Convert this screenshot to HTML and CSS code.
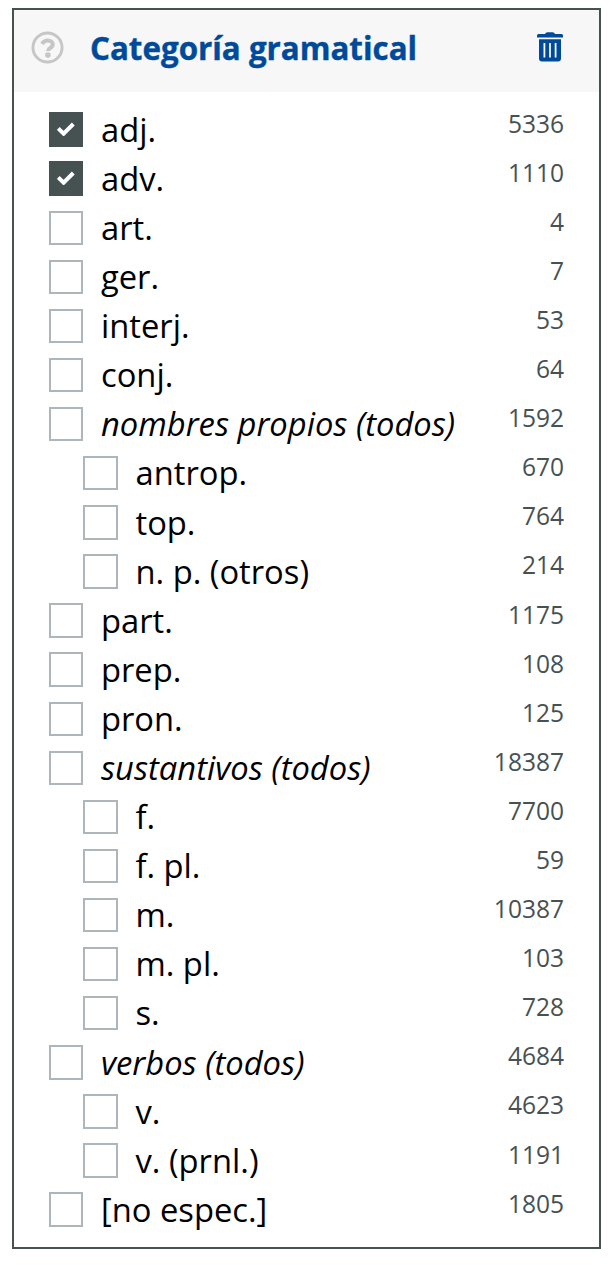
FILE: index.html
```
<!DOCTYPE html>
<html lang="es">
<head>
<meta charset="utf-8">
<title>Categoría gramatical</title>
<link rel="stylesheet" href="styles.css">
</head>
<body>
<section class="panel">
  <header class="head">
    <svg class="help" viewBox="0 0 34 34" fill="none" stroke="#c6c6c6">
      <circle cx="17" cy="17" r="15" stroke-width="3"/>
      <path d="M11.400 13.400C12.800 10.800 14.800 9.800 17.200 9.800c3 0 5.200 1.800 5.200 4.100 0 3.800-4.900 3.200-4.900 6.600" stroke-width="4.200"/>
      <circle cx="17.400" cy="24.700" r="2.900" fill="#c6c6c6" stroke="none"/>
    </svg>
    <h2 class="title">Categoría gramatical</h2>
    <svg class="trash" viewBox="0 0 26 30" fill="#004a9c">
      <path d="M0 5.500V3.500Q0 2 1.500 2H8Q8.500 .3 10.500 .3h5Q17.500 .3 18 2h6.500Q26 2 26 3.500V5.500z"/>
      <path fill-rule="evenodd" d="M2 7.300h22v19.200q0 3-3 3H5q-3 0-3-3zM6.500 11v14.500h1.800V11zm5.600 0v14.500h1.800V11zm5.600 0v14.500h1.800V11z"/>
    </svg>
  </header>
  <ul class="list">
    <li class="row"><span class="box on"><svg viewBox="0 0 18 14"><path d="M1.300 6.500 6.600 11.700 16.300 2" fill="none" stroke="#fff" stroke-width="4"/></svg></span><span class="label">adj.</span><span class="count">5336</span></li>
    <li class="row"><span class="box on"><svg viewBox="0 0 18 14"><path d="M1.300 6.500 6.600 11.700 16.300 2" fill="none" stroke="#fff" stroke-width="4"/></svg></span><span class="label">adv.</span><span class="count">1110</span></li>
    <li class="row"><span class="box"></span><span class="label">art.</span><span class="count">4</span></li>
    <li class="row"><span class="box"></span><span class="label">ger.</span><span class="count">7</span></li>
    <li class="row"><span class="box"></span><span class="label">interj.</span><span class="count">53</span></li>
    <li class="row"><span class="box"></span><span class="label">conj.</span><span class="count">64</span></li>
    <li class="row"><span class="box"></span><span class="label group">nombres propios (todos)</span><span class="count">1592</span></li>
    <li class="row sub"><span class="box"></span><span class="label">antrop.</span><span class="count">670</span></li>
    <li class="row sub"><span class="box"></span><span class="label">top.</span><span class="count">764</span></li>
    <li class="row sub"><span class="box"></span><span class="label">n. p. (otros)</span><span class="count">214</span></li>
    <li class="row"><span class="box"></span><span class="label">part.</span><span class="count">1175</span></li>
    <li class="row"><span class="box"></span><span class="label">prep.</span><span class="count">108</span></li>
    <li class="row"><span class="box"></span><span class="label">pron.</span><span class="count">125</span></li>
    <li class="row"><span class="box"></span><span class="label group">sustantivos (todos)</span><span class="count">18387</span></li>
    <li class="row sub"><span class="box"></span><span class="label">f.</span><span class="count">7700</span></li>
    <li class="row sub"><span class="box"></span><span class="label">f. pl.</span><span class="count">59</span></li>
    <li class="row sub"><span class="box"></span><span class="label">m.</span><span class="count">10387</span></li>
    <li class="row sub"><span class="box"></span><span class="label">m. pl.</span><span class="count">103</span></li>
    <li class="row sub"><span class="box"></span><span class="label">s.</span><span class="count">728</span></li>
    <li class="row"><span class="box"></span><span class="label group">verbos (todos)</span><span class="count">4684</span></li>
    <li class="row sub"><span class="box"></span><span class="label">v.</span><span class="count">4623</span></li>
    <li class="row sub"><span class="box"></span><span class="label">v. (prnl.)</span><span class="count">1191</span></li>
    <li class="row"><span class="box"></span><span class="label">[no espec.]</span><span class="count">1805</span></li>
  </ul>
</section>
</body>
</html>
```
FILE: styles.css
```
* { box-sizing: border-box; }
body {
  margin: 0;
  padding: 8px 14px 0 12px;
  background: #fff;
  color: #000;
  font-family: "Open Sans", "Noto Sans", sans-serif;
}
.panel {
  height: 1241px;
  border: 2px solid #465152;
}
.head {
  display: flex;
  align-items: flex-start;
  height: 82px;
  padding: 0 36.400px 0 17px;
  background: #f7f7f7;
}
.help { width: 33px; height: 33px; margin-top: 21px; flex: none; }
.title {
  flex: 1;
  margin: 13px 0 0 26px;
  font-size: 33px;
  line-height: 50px;
  font-weight: 700;
  color: #004a9c;
  white-space: nowrap;
  -webkit-text-stroke: .4px #004a9c;
  transform: scaleX(.949);
  transform-origin: 0 0;
}
.trash { width: 26px; height: 30px; margin-top: 22px; flex: none; }
.list {
  margin: 0;
  padding: 13.300px 35px 0;
  list-style: none;
}
.row {
  display: flex;
  align-items: flex-start;
  height: 49.100px;
}
.sub { padding-left: 34.400px; }
.box {
  flex: none;
  display: flex;
  align-items: center;
  justify-content: center;
  width: 34.400px;
  height: 34.400px;
  margin-top: 7.100px;
  border: 2px solid #adb5bd;
}
.sub .box { width: 35px; margin-right: -.5px; }
.on { background: #465152; border-color: #465152; }
.on svg { width: 18px; height: 14px; margin-top: -1px; }
.label {
  flex: 1;
  margin: -.5px 0 0 17.600px;
  font-size: 32.730px;
  line-height: 49.500px;
  white-space: nowrap;
}
.group { font-style: italic; }
.count {
  margin-top: .3px;
  font-size: 24.540px;
  line-height: 36.800px;
  color: #465152;
}
```
